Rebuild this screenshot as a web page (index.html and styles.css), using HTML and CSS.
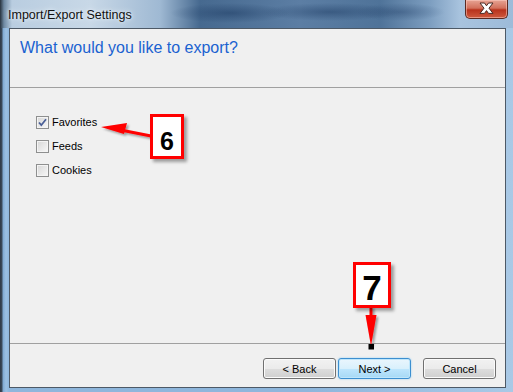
FILE: index.html
```html
<!DOCTYPE html>
<html lang="en">
<head>
  <meta charset="UTF-8" />
  <title>Import/Export Settings</title>
  <link rel="stylesheet" href="styles.css">
</head>
<body>
  <div class="window">
    <div class="titlebar">
      <span class="title">Import/Export Settings</span>
      <div class="close">
        <svg width="43" height="19" viewBox="0 0 43 19">
          <path d="M15 4 L19.5 4 L21.5 6.8 L23.5 4 L28 4 L24 9.2 L28 14.4 L23.5 14.4 L21.5 11.6 L19.5 14.4 L15 14.4 L19 9.2 Z" fill="#ffffff" stroke="#4a2a24" stroke-width="1" stroke-linejoin="round"/>
        </svg>
      </div>
    </div>

    <div class="client">
      <div class="header">
        <h1>What would you like to export?</h1>
      </div>

      <div class="content">
        <label class="option">
          <span class="box">
            <svg width="11" height="11" viewBox="0 0 11 11">
              <path d="M2 5.5 L4.3 8.2 L9 2.2" fill="none" stroke="#4a5f97" stroke-width="1.8"/>
            </svg>
          </span>
          Favorites
        </label>
        <label class="option"><span class="box"></span>Feeds</label>
        <label class="option"><span class="box"></span>Cookies</label>
      </div>

      <div class="footer">
        <button class="btn">&lt; Back</button>
        <button class="btn default">Next &gt;</button>
        <button class="btn cancel">Cancel</button>
      </div>
    </div>

    <!-- annotation overlays -->
    <svg class="arrows" width="513" height="392" viewBox="0 0 513 392">
      <defs>
        <filter id="shade" x="-20%" y="-20%" width="160%" height="160%">
          <feDropShadow dx="2" dy="2" stdDeviation="1.2" flood-color="#000" flood-opacity="0.35"/>
        </filter>
      </defs>
      <g filter="url(#shade)" fill="#ff0000" stroke="#ff0000">
        <line x1="118" y1="129.5" x2="151" y2="136" stroke-width="3"/>
        <polygon points="101,127 127,123 124,134" stroke="none"/>
        <line x1="371" y1="306" x2="371" y2="325" stroke-width="3"/>
        <polygon points="365.5,315 376.5,315 371,346" stroke="none"/>
      </g>
      <rect x="368.5" y="302.5" width="5.5" height="5.5" fill="#000"/>
      <rect x="368.5" y="344" width="5.5" height="5.5" fill="#000"/>
    </svg>
    <div class="callout c6">6</div>
    <div class="callout c7">7</div>
  </div>
</body>
</html>
```

FILE: styles.css
```css
body {
  margin: 0;
  font-family: "Liberation Sans", Arial, sans-serif;
}
.window {
  position: relative;
  width: 513px;
  height: 392px;
  display: flex;
  flex-direction: column;
  background: linear-gradient(90deg, #2e3946 0px, #3d4c5c 2px, #7fa9d2 3px, #9cc0e2 6px, #8eb6dc 9px, #8eb6dc 60%, #a9c9e6 100%);
  overflow: hidden;
}
.titlebar {
  height: 28px;
  display: flex;
  align-items: flex-start;
  background:
    radial-gradient(ellipse 60px 10px at 230px 13px, rgba(30,60,100,0.55), transparent),
    radial-gradient(ellipse 70px 9px at 330px 12px, rgba(30,60,100,0.5), transparent),
    radial-gradient(ellipse 45px 9px at 400px 12px, rgba(40,70,110,0.45), transparent),
    linear-gradient(90deg, #27323d 0px, #6f8aa3 4px, #b9cde0 12px, #c8d8e7 90px, #9fb9d3 160px, #46698f 200px, #5c7ea4 300px, #4f7399 380px, #7d9ec0 430px, #a8c3de 460px, #9dbbd9 513px);
}
.title {
  padding: 7px 0 0 8px;
  font-size: 12.5px;
  line-height: 16px;
  color: #111;
  text-shadow: 0 0 6px #e8f0f8, 0 0 3px #e8f0f8;
}
.close {
  margin-left: auto;
  margin-right: 5px;
  width: 43px;
  height: 19px;
  box-sizing: border-box;
  border: 1px solid #5b2a22;
  border-top: none;
  border-radius: 0 0 5px 5px;
  background: linear-gradient(#e7a494 0%, #d2705c 45%, #b8321c 55%, #cf5a3e 100%);
  box-shadow: inset 0 0 0 1px rgba(255,210,200,0.5);
}
.close svg {
  display: block;
  margin: -1px 0 0 -1px;
}
.client {
  flex: 1;
  margin: 0 7px 4px 9px;
  border: 1px solid #4d5966;
  background: #f0f0f0;
  display: flex;
  flex-direction: column;
}
.header {
  height: 58px;
  border-bottom: 1px solid #a0a0a0;
}
.header h1 {
  margin: 0;
  padding: 9px 0 0 10px;
  font-size: 16px;
  line-height: 20px;
  font-weight: normal;
  color: #1a62d0;
}
.content {
  flex: 1;
  padding: 22px 0 0 26px;
}
.option {
  height: 24px;
  display: flex;
  align-items: center;
  font-size: 11px;
  color: #000;
}
.box {
  width: 13px;
  height: 13px;
  box-sizing: border-box;
  margin-right: 3px;
  border: 1px solid #8e8f8f;
  background: linear-gradient(135deg, #d6d6d6, #f8f8f8);
  box-shadow: inset 0 0 0 1px #f4f4f4;
}
.box svg {
  display: block;
}
.footer {
  height: 44px;
  box-sizing: border-box;
  border-top: 1px solid #a0a0a0;
  display: flex;
  justify-content: flex-end;
  align-items: flex-start;
  padding: 14px 9px 0 0;
  gap: 2px;
}
.btn {
  width: 73px;
  height: 21px;
  padding: 0;
  font-family: "Liberation Sans", Arial, sans-serif;
  font-size: 11px;
  color: #000;
  border: 1px solid #707070;
  border-radius: 3px;
  background: linear-gradient(#f2f2f2 0%, #ebebeb 50%, #dddddd 51%, #cfcfcf 100%);
  box-shadow: inset 0 0 0 1px #fbfbfb;
}
.btn.default {
  border-color: #3c8fd0;
  background: linear-gradient(#eaf6fd 0%, #d9f0fc 50%, #bee6fd 51%, #a7d9f5 100%);
  box-shadow: inset 0 0 0 1px #bfe6fb, 0 0 2px #8ccdf4;
}
.btn.cancel {
  margin-left: 10px;
}
.arrows {
  position: absolute;
  left: 0;
  top: 0;
  pointer-events: none;
}
.callout {
  position: absolute;
  box-sizing: border-box;
  border: 3px solid #ff0000;
  background: #fff;
  text-align: center;
  font-weight: bold;
  color: #000;
  box-shadow: 3px 3px 3px rgba(0,0,0,0.35);
}
.c6 {
  left: 150px;
  top: 114px;
  width: 34px;
  height: 45px;
  padding-top: 12px;
  font-size: 25px;
  line-height: 25px;
}
.c7 {
  left: 353px;
  top: 262px;
  width: 38px;
  height: 46px;
  padding-top: 5px;
  font-size: 35px;
  line-height: 35px;
}
```
